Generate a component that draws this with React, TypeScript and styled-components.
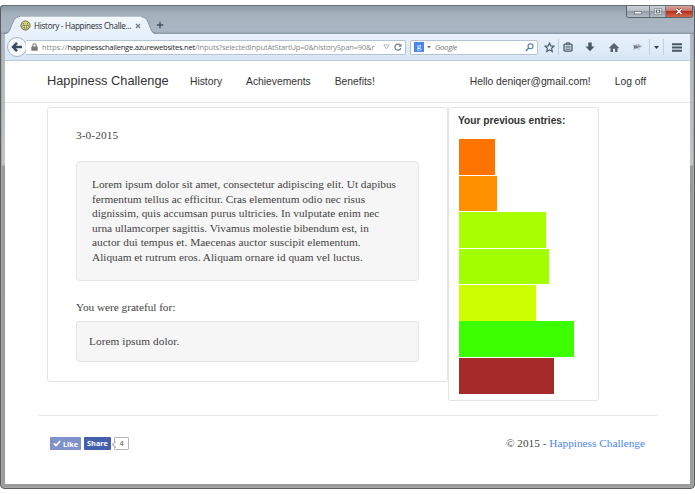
import styled, { createGlobalStyle } from "styled-components";

const entries: { color: string; width: number }[] = [
  { color: "#ff7300", width: 36 },
  { color: "#ff9100", width: 38 },
  { color: "#a8ff00", width: 87 },
  { color: "#a2ff00", width: 90 },
  { color: "#ccff00", width: 77 },
  { color: "#3cff00", width: 115 },
  { color: "#a52a2a", width: 95 },
];

const entryText: { text: string; spacing: number }[] = [
  {
    text: "Lorem ipsum dolor sit amet, consectetur adipiscing elit. Ut dapibus",
    spacing: 0,
  },
  {
    text: "fermentum tellus ac efficitur. Cras elementum odio nec risus",
    spacing: 0,
  },
  {
    text: "dignissim, quis accumsan purus ultricies. In vulputate enim nec",
    spacing: 0.01,
  },
  {
    text: "urna ullamcorper sagittis. Vivamus molestie bibendum est, in",
    spacing: 0,
  },
  {
    text: "auctor dui tempus et. Maecenas auctor suscipit elementum.",
    spacing: 0.03,
  },
  {
    text: "Aliquam et rutrum eros. Aliquam ornare id quam vel luctus.",
    spacing: 0,
  },
];

export default function App() {
  return (
    <>
      <GlobalStyle />
      <BrowserWindow>
        <TitleBar>
          <Tab>
            <TabEdge viewBox="0 0 15 18">
              <path d="M0 18C8 18 5 1 15 .5V18Z" fill="#e8f1fb" />
              <path d="M0 17.5C8 17.5 5 1 15 .5" fill="none" stroke="#73808c" strokeWidth=".7" />
            </TabEdge>
            <TabBody>
              <Favicon viewBox="0 0 12 12">
                <circle cx="6" cy="6" r="5" fill="#cfd080" stroke="#67682c" />
                <path d="M2.7 6h6.6Q8.7 9.5 6 9.5T2.7 6Z" fill="#f8f8dc" stroke="#70722d" strokeWidth=".7" />
                <path d="M3.7 3.3v1.5M8.1 3.3v1.5M4.8 6.3v2.7M7 6.3v2.7" stroke="#61652b" strokeWidth=".8" />
              </Favicon>
              <TabTitle>History - Happiness Challe...</TabTitle>
              <TabClose viewBox="0 0 6 6">
                <path d="M1 1l4 4M5 1L1 5" stroke="#757d86" strokeWidth="1.3" />
              </TabClose>
            </TabBody>
            <TabEdge viewBox="0 0 15 18">
              <path d="M0 .5C10 1 7 18 15 18H0Z" fill="#e8f1fb" />
              <path d="M0 .5C10 1 7 17.5 15 17.5" fill="none" stroke="#73808c" strokeWidth=".7" />
            </TabEdge>
          </Tab>
          <NewTab viewBox="0 0 8 8">
            <path d="M4 .8v6.4M.8 4h6.4" stroke="#46535f" strokeWidth="1.3" />
          </NewTab>
          <WindowControls>
            <ControlButton $width={22}>
              <svg width="8" height="6" viewBox="0 0 8 6">
                <rect x=".5" y="2.7" width="7" height="2.2" fill="#fff" stroke="#56606a" strokeWidth=".6" />
              </svg>
            </ControlButton>
            <ControlButton $width={16}>
              <svg width="8" height="7" viewBox="0 0 8 7">
                <rect x="1.2" y="1.2" width="5.6" height="4.6" fill="#65717c" stroke="#4d5964" strokeWidth="1.8" />
                <rect x="1.2" y="1.2" width="5.6" height="4.6" fill="none" stroke="#fff" strokeWidth="1" />
                <rect x="3" y="2.7" width="2" height="1.6" fill="#fff" />
              </svg>
            </ControlButton>
            <ControlButton $width={27} $close>
              <svg width="8" height="7" viewBox="0 0 8 7">
                <path d="M1.5 1l5 5M6.5 1l-5 5" stroke="#6e3530" strokeWidth="2.5" />
                <path d="M1.5 1l5 5M6.5 1l-5 5" stroke="#fff" strokeWidth="1.5" />
              </svg>
            </ControlButton>
          </WindowControls>
        </TitleBar>

        <Toolbar>
          <BackButton>
            <svg width="12" height="12" viewBox="0 0 12 12">
              <path d="M11 6H2.5M6 1.8L2 6l4 4.2" fill="none" stroke="#394b5c" strokeWidth="2.5" />
            </svg>
          </BackButton>
          <AddressBar>
            <LockIcon viewBox="0 0 7 8">
              <path d="M1.8 4V2.5a1.7 1.7 0 013.4 0V4" fill="none" stroke="#77797b" strokeWidth="1.1" />
              <rect x=".3" y="3.5" width="6.4" height="4.2" rx=".5" fill="#77797b" />
            </LockIcon>
            <Address>
              <UrlPart $spacing={-0.06}>https://</UrlPart>
              <UrlHost>happinesschallenge.azurewebsites.net</UrlHost>
              <UrlPart $spacing={-0.2}>
                /Inputs?selectedInputAtStartUp=0&amp;historySpan=90&amp;r
              </UrlPart>
            </Address>
            <svg width="7" height="6" viewBox="0 0 7 6">
              <path d="M.8 1h5.4L3.5 5Z" fill="none" stroke="#aab0b5" strokeWidth=".9" />
            </svg>
            <Reload viewBox="0 0 8 8">
              <path d="M6.3 2.3A3 3 0 106.8 5" fill="none" stroke="#6a7d90" strokeWidth="1.2" />
              <path d="M7.5.5v3.3H4.3Z" fill="#6a7d90" />
            </Reload>
          </AddressBar>
          <SearchBar>
            <GoogleMark>g</GoogleMark>
            <svg width="4" height="3" viewBox="0 0 4 3">
              <path d="M0 0h4L2 2.5Z" fill="#777" />
            </svg>
            <SearchHint>Google</SearchHint>
            <svg width="9" height="9" viewBox="0 0 9 9">
              <circle cx="5.5" cy="3.3" r="2.5" fill="none" stroke="#4c79ad" strokeWidth="1.1" />
              <path d="M3.7 5.1L.8 8" stroke="#4c79ad" strokeWidth="1.4" />
            </svg>
          </SearchBar>
          <ToolbarIcons>
            <IconCell $width={18}>
              <svg width="11" height="11" viewBox="0 0 11 11">
                <path d="M5.5 1l1.3 2.9 3.2.3-2.4 2.1.7 3.2-2.8-1.7-2.8 1.7.7-3.2L1 4.2l3.2-.3Z" fill="none" stroke="#485764" strokeWidth="1.1" />
              </svg>
            </IconCell>
            <IconDivider />
            <IconCell $width={18}>
              <svg width="10" height="10" viewBox="0 0 10 10">
                <path d="M3.5 2V.8h3V2" fill="none" stroke="#485764" />
                <rect x="1" y="2.1" width="8" height="7" rx="1" fill="none" stroke="#485764" strokeWidth="1.3" />
                <path d="M2.5 4.2h5M2.5 5.8h5M2.5 7.3h5" stroke="#485764" strokeWidth=".8" />
              </svg>
            </IconCell>
            <IconCell $width={26}>
              <svg width="10" height="10" viewBox="0 0 10 10">
                <path d="M3.3.5h3.4v4h2.8L5 9.3.5 4.5h2.8Z" fill="#485764" />
              </svg>
            </IconCell>
            <IconCell $width={21}>
              <svg width="10" height="9" viewBox="0 0 10 9">
                <path d="M5 0l5 4.7-.8.7-.7-.6V9h-2.4V5.8H4V9H1.5V4.8l-.7.6-.8-.7Z" fill="#5a646d" />
              </svg>
            </IconCell>
            <IconCell $width={25}>
              <svg width="10" height="8" viewBox="0 0 10 8">
                <path d="M1 2.2l3 .5M1.3 6.5l3-2M5 1.2L4.5 4M7 1L6 3.2M6.5 5.5l1 1.2M8 3.5l1.7-.8" stroke="#838990" strokeWidth=".8" />
                <ellipse cx="4" cy="4.2" rx="2.4" ry="1.4" fill="#727980" />
                <ellipse cx="7" cy="3.4" rx="1.7" ry="1.2" fill="#959a9f" />
              </svg>
            </IconCell>
            <IconDivider />
            <IconCell $width={13}>
              <svg width="5" height="3" viewBox="0 0 5 3">
                <path d="M0 0h5L2.5 3Z" fill="#333d45" />
              </svg>
            </IconCell>
            <IconDivider />
            <IconCell $width={26}>
              <svg width="10" height="9" viewBox="0 0 10 9">
                <path d="M0 1.2h10M0 4.5h10M0 7.8h10" stroke="#485764" strokeWidth="1.9" />
              </svg>
            </IconCell>
          </ToolbarIcons>
        </Toolbar>

        <Page>
          <NavBar>
            <Brand>Happiness Challenge</Brand>
            <NavLinks>
              <NavLink>History</NavLink>
              <NavLink>Achievements</NavLink>
              <NavLink>Benefits!</NavLink>
            </NavLinks>
            <NavLinks>
              <NavLink>Hello deniqer@gmail.com!</NavLink>
              <NavLink>Log off</NavLink>
            </NavLinks>
          </NavBar>

          <Content>
            <EntryPanel>
              <EntryDate>3-0-2015</EntryDate>
              <Well>
                {entryText.map((line) => (
                  <Line key={line.text} $spacing={line.spacing}>
                    {line.text}
                  </Line>
                ))}
              </Well>
              <GratefulLabel>You were grateful for:</GratefulLabel>
              <SmallWell>
                <Line $spacing={0.05}>Lorem ipsum dolor.</Line>
              </SmallWell>
            </EntryPanel>
            <HistoryPanel>
              <HistoryTitle>Your previous entries:</HistoryTitle>
              {entries.map((entry) => (
                <Bar
                  key={entry.color}
                  style={{ width: entry.width, backgroundColor: entry.color }}
                />
              ))}
            </HistoryPanel>
          </Content>

          <Footer>
            <Social>
              <LikeButton>
                <svg width="8" height="7" viewBox="0 0 8 7">
                  <path d="M.8 3.5l2.2 2L7.2 1" fill="none" stroke="#fff" strokeWidth="1.7" />
                </svg>
                Like
              </LikeButton>
              <ShareButton>Share</ShareButton>
              <ShareCount>4</ShareCount>
            </Social>
            <Copyright>
              © 2015 - <a>Happiness Challenge</a>
            </Copyright>
          </Footer>
        </Page>
      </BrowserWindow>
    </>
  );
}

const GlobalStyle = createGlobalStyle`
  * {
    box-sizing: border-box;
  }
  body {
    margin: 0;
    background: #fff;
    overflow: hidden;
  }
  svg {
    flex: none;
    display: block;
  }
`;

const BrowserWindow = styled.div`
  display: flex;
  flex-direction: column;
  width: 695px;
  height: 484px;
  margin-top: 5px;
  padding: 0 5px 5px;
  border-radius: 4px 4px 5px 5px;
  background: linear-gradient(#8b98a4 0, #aeb9c4 34px, #b7bdc3 100px, #c4c4c4 160px, #999 161px, #9c9c9c 100%);
  box-shadow: inset 0 0 0 1px #5b5d60, inset 0 0 0 2px #a7a9ab;
`;
const TitleBar = styled.div`
  display: flex;
  height: 29px;
  margin: 0 -4px;
  padding-left: 4px;
  border-top: 1px solid #68727b;
  border-radius: 4px 4px 0 0;
  background: linear-gradient(#8e9aa5, #a5b1bd 30%, #aab6c3 90%, #8795a2);
`;
const Tab = styled.div`
  display: flex;
  align-self: flex-end;
  height: 18px;
`;
const TabEdge = styled.svg`
  width: 15px;
  height: 18px;
`;
const TabBody = styled.div`
  display: flex;
  align-items: center;
  width: 121px;
  height: 18px;
  border-top: 1px solid #b9c5d1;
  background: linear-gradient(#f4f8fd, #e8f1fb);
`;
const Favicon = styled.svg`
  width: 11px;
  height: 11px;
`;
const TabTitle = styled.span`
  width: 98px;
  margin-left: 3px;
  color: #25292d;
  font: 8.1px "Open Sans", sans-serif;
  letter-spacing: -0.28px;
  white-space: nowrap;
`;
const TabClose = styled.svg`
  width: 6px;
  height: 6px;
  margin-left: 4px;
`;
const NewTab = styled.svg`
  width: 8px;
  height: 8px;
  margin: 15px 0 0;
`;
const WindowControls = styled.div`
  display: flex;
  height: 12px;
  margin: 0 1px 0 auto;
  border: 1px solid #59636c;
  border-top: 0;
  border-radius: 0 0 3px 3px;
  overflow: hidden;
`;
const ControlButton = styled.div<{ $width: number; $close?: boolean }>`
  display: flex;
  align-items: center;
  justify-content: center;
  width: ${(props) => props.$width}px;
  border-left: 1px solid #737d87;
  background: ${(props) =>
    props.$close
      ? "linear-gradient(#d9a39b, #c77367 45%, #b92f1d 50%, #d36b4a)"
      : "linear-gradient(#cbd1d7, #b4bdc6 45%, #929da8 50%, #b2bdc8)"};
  &:first-child {
    border-left: 0;
  }
`;
const Toolbar = styled.div`
  display: flex;
  align-items: center;
  height: 27px;
  border-bottom: 1px solid #bdcbd9;
  background: linear-gradient(#e8f1fb, #d8e7f6);
`;
const BackButton = styled.div`
  display: flex;
  align-items: center;
  justify-content: center;
  flex: none;
  width: 20px;
  height: 20px;
  margin-left: 2px;
  border: 1px solid #a7b6c5;
  border-radius: 50%;
  background: #f7fafd;
`;
const AddressBar = styled.div`
  display: flex;
  align-items: center;
  width: 380px;
  height: 15px;
  margin-left: -1px;
  padding-left: 5px;
  border: 1px solid #b4c3d2;
  border-left: 0;
  border-radius: 0 2px 2px 0;
  background: #fff;
`;
const LockIcon = styled.svg`
  width: 7px;
  height: 8px;
`;
const Address = styled.div`
  display: flex;
  width: 341px;
  margin-left: 4px;
  font: 7.6px "Open Sans", sans-serif;
  white-space: nowrap;
`;
const UrlPart = styled.span<{ $spacing: number }>`
  color: #85898d;
  letter-spacing: ${(props) => props.$spacing}px;
`;
const UrlHost = styled.span`
  color: #202429;
  letter-spacing: -0.24px;
`;
const Reload = styled.svg`
  width: 8px;
  height: 8px;
  margin-left: 4px;
`;
const SearchBar = styled.div`
  display: flex;
  align-items: center;
  width: 128px;
  height: 15px;
  margin-left: 4px;
  padding: 0 3px;
  border: 1px solid #b4c3d2;
  border-radius: 2px;
  background: #fff;
`;
const GoogleMark = styled.span`
  width: 10px;
  height: 10px;
  margin-right: 3px;
  background: #4787ed;
  color: #fff;
  font: 9px/8px "Liberation Serif", serif;
  text-align: center;
`;
const SearchHint = styled.span`
  flex: 1;
  margin-left: 4px;
  color: #777;
  font: italic 7.8px "Open Sans", sans-serif;
  letter-spacing: -0.3px;
`;
const ToolbarIcons = styled.div`
  display: flex;
  align-items: center;
  margin-left: auto;
`;
const IconCell = styled.div<{ $width: number }>`
  display: flex;
  align-items: center;
  justify-content: center;
  width: ${(props) => props.$width}px;
  height: 20px;
`;
const IconDivider = styled.div`
  width: 1px;
  height: 16px;
  background: #c2d0dd;
`;
const Page = styled.div`
  flex: 1;
  background: #fff;
`;
const NavBar = styled.div`
  display: flex;
  align-items: center;
  height: 42px;
  padding: 0 44px 0 42px;
  border-bottom: 1px solid #e5e5e5;
  color: #333;
  font-family: "Liberation Sans", sans-serif;
`;
const Brand = styled.div`
  width: 143px;
  padding-bottom: 2px;
  font-size: 12.8px;
  white-space: nowrap;
`;
const NavLinks = styled.div`
  display: flex;
  gap: 24px;
  &:last-child {
    margin-left: auto;
  }
`;
const NavLink = styled.div`
  font-size: 10.3px;
  white-space: nowrap;
`;
const Content = styled.div`
  display: flex;
  align-items: flex-start;
  height: 312px;
  padding: 4px 0 0 42px;
`;
const EntryPanel = styled.div`
  width: 401px;
  height: 275px;
  padding: 20px 28px 0;
  border: 1px solid #e4e4e4;
  border-radius: 3px;
  color: #444;
  font: 11.3px/14.6px "Liberation Serif", serif;
`;
const EntryDate = styled.div`
  height: 33px;
  letter-spacing: 0.1px;
`;
const Well = styled.div`
  height: 120px;
  padding: 15px 15px 0;
  border: 1px solid #e5e5e5;
  border-radius: 4px;
  background: #f6f6f6;
`;
const Line = styled.div<{ $spacing: number }>`
  letter-spacing: ${(props) => props.$spacing}px;
  white-space: nowrap;
`;
const GratefulLabel = styled.div`
  height: 40px;
  padding-top: 19px;
  letter-spacing: -0.04px;
`;
const SmallWell = styled.div`
  height: 41px;
  padding: 12px 12px 0;
  border: 1px solid #e5e5e5;
  border-radius: 3px;
  background: #f6f6f6;
`;
const HistoryPanel = styled.div`
  width: 151px;
  height: 294px;
  padding: 5px 0 0 10px;
  border: 1px solid #e4e4e4;
  border-radius: 3px;
`;
const HistoryTitle = styled.div`
  height: 26.3px;
  margin-left: -1px;
  color: #333;
  font: bold 10.2px/15px "Liberation Sans", sans-serif;
`;
const Bar = styled.div`
  height: 35.6px;
  margin-bottom: 0.85px;
`;
const Footer = styled.div`
  display: flex;
  justify-content: space-between;
  width: 620px;
  margin-left: 33px;
  padding: 21px 13px 0 12px;
  border-top: 1px solid #e8e8e8;
`;
const Social = styled.div`
  display: flex;
  align-items: center;
  height: 13px;
  font: bold 7.3px "Open Sans", sans-serif;
`;
const LikeButton = styled.div`
  display: flex;
  align-items: center;
  justify-content: center;
  gap: 2px;
  width: 31px;
  height: 13px;
  border-radius: 1px;
  background: #7f93ca;
  color: #fff;
`;
const ShareButton = styled.div`
  width: 27px;
  height: 13px;
  margin-left: 3px;
  border-radius: 1px;
  background: #435fae;
  color: #fff;
  line-height: 13px;
  text-align: center;
`;
const ShareCount = styled.div`
  position: relative;
  width: 15px;
  height: 13px;
  margin-left: 3px;
  border: 1px solid #b4b7bd;
  border-radius: 1px;
  color: #555;
  font-weight: 400;
  line-height: 11px;
  text-align: center;
  &::before {
    content: "";
    position: absolute;
    top: 4px;
    left: -2.5px;
    width: 4px;
    height: 4px;
    border: solid #a9acb2;
    border-width: 0 0 1px 1px;
    background: #fff;
    transform: rotate(45deg);
  }
`;
const Copyright = styled.div`
  color: #444;
  font: 11.3px/13px "Liberation Serif", serif;
  a {
    color: #4c86ec;
  }
`;
